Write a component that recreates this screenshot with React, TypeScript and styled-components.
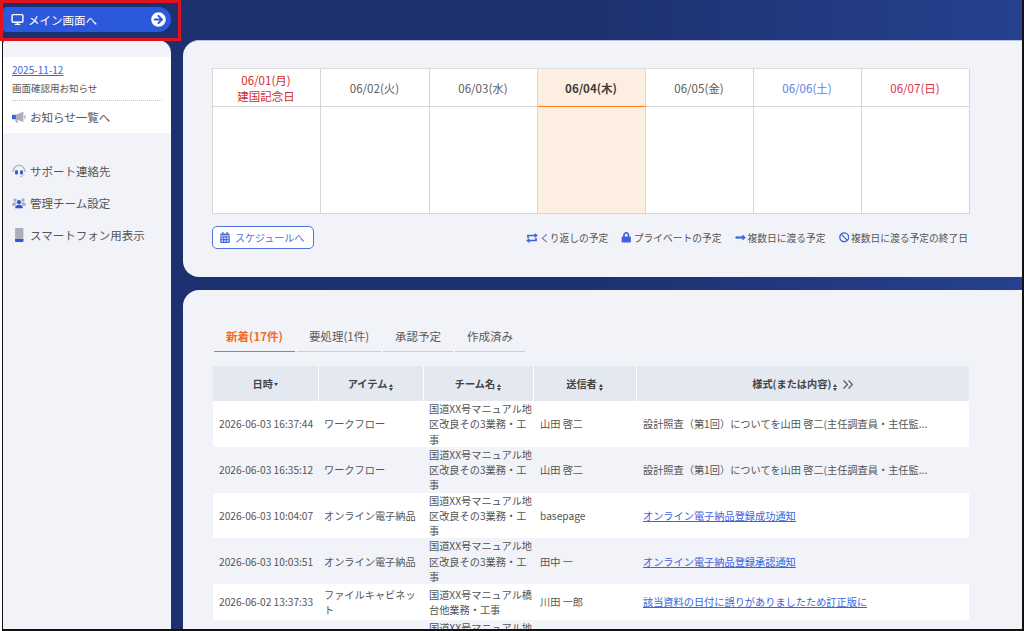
import styled, { createGlobalStyle } from 'styled-components';
import {
  FaArrowCircleRight,
  FaBan,
  FaCalendarAlt,
  FaLock,
  FaLongArrowAltRight,
} from 'react-icons/fa';
import { LuMonitor } from 'react-icons/lu';

const GlobalStyle = createGlobalStyle`
  html, body {
    margin: 0;
    background: #fff;
  }
  * {
    box-sizing: border-box;
  }
`;

const Page = styled.div`
  position: relative;
  width: 1024px;
  height: 631px;
  padding-left: 2px;
  background: #fff;
  overflow: hidden;
  font-family: 'Noto Sans CJK JP', 'Noto Sans', sans-serif;
  color: #555;
`;

const Frame = styled.div`
  height: 100%;
  display: flex;
  flex-direction: column;
  border-left: 1px solid #111;
  border-right: 2px solid #111;
  border-bottom: 2px solid #111;
  background: linear-gradient(90deg, #1c2f6e 0%, #1e3272 60%, #25418f 100%);
  overflow: hidden;
`;

const TopBar = styled.header`
  flex: 0 0 40px;
  width: 168px;
  padding-top: 7px;
`;

const MainButton = styled.a`
  height: 25px;
  display: flex;
  align-items: center;
  padding: 0 5px 0 8px;
  border-radius: 4px 13px 13px 4px;
  background: #2c59dc;
  color: #fff;
  font-size: 11.5px;
  svg:first-child {
    width: 13px;
    height: 13px;
    margin-right: 4px;
    stroke-width: 2.6;
  }
  svg:last-child {
    width: 15px;
    height: 15px;
    margin-left: auto;
  }
`;

const Highlight = styled.div`
  position: absolute;
  left: 0;
  top: 0;
  width: 181px;
  height: 41px;
  border: 3px solid #e0141c;
  pointer-events: none;
`;

const Body = styled.div`
  flex: 1;
  min-height: 0;
  display: flex;
  gap: 12px;
`;

const Sidebar = styled.aside`
  flex: 0 0 168px;
  padding-top: 17px;
  border-radius: 4px 13px 0 0;
  background: #f1f3f8;
`;

const NoticeBox = styled.section`
  height: 76px;
  padding: 6px 9px 0;
  background: #fff;
`;

const DateLink = styled.a`
  display: block;
  font-size: 10px;
  line-height: 14px;
  color: #3f63dc;
  text-decoration: underline;
`;

const NoticeText = styled.p`
  margin: 4px 0 0;
  padding-bottom: 5px;
  font-size: 9.5px;
  line-height: 14px;
  border-bottom: 1px dotted #c4c4c4;
`;

const SideLink = styled.a`
  height: 32px;
  display: flex;
  align-items: center;
  gap: 4px;
  padding-left: 9px;
  font-size: 11.5px;
  color: #555;
  svg {
    flex: 0 0 14px;
    width: 14px;
    height: 14px;
  }
`;

const NoticeLink = styled(SideLink)`
  height: 31px;
  padding-left: 0;
`;

const SideMenu = styled.nav`
  margin-top: 22px;
`;

const Content = styled.main`
  flex: 1;
  min-width: 0;
  display: flex;
  flex-direction: column;
  gap: 13px;
`;

const Panel = styled.section`
  border-radius: 16px 0 0 16px;
  background: #f1f3f8;
  border-top: 1px solid #b9c2de;
`;

const CalendarPanel = styled(Panel)`
  flex: 0 0 237px;
  padding: 27px 52px 0 29px;
`;

const ListPanel = styled(Panel)`
  flex: 1;
  min-height: 0;
  border-top: 0;
  border-radius: 16px 0 0 0;
  padding: 37px 52px 0 30px;
  overflow: hidden;
`;

const Calendar = styled.div`
  display: grid;
  grid-template-columns: 108px 109px repeat(5, 108px);
  grid-template-rows: 38px 107px;
  width: 758px;
  border-left: 1px solid #d6d6d6;
  border-top: 1px solid #dedede;
  background: #fff;
`;

const dayColor = {
  plain: '#5c5c5c',
  holiday: '#d42a2a',
  sat: '#5f80e6',
  sun: '#d8324a',
  today: '#3d3d3d',
};

const DayHead = styled.div<{ $tone: keyof typeof dayColor }>`
  display: flex;
  flex-direction: column;
  align-items: center;
  justify-content: center;
  padding-right: 1px;
  border-right: 1px solid #d6d6d6;
  border-bottom: 1px solid ${(p) => (p.$tone === 'today' ? '#ff7a1a' : '#d6d6d6')};
  background: ${(p) => (p.$tone === 'today' ? '#fdeee2' : '#fff')};
  color: ${(p) => dayColor[p.$tone]};
  font-size: 11.5px;
  line-height: 16px;
  font-weight: ${(p) => (p.$tone === 'today' ? 700 : 400)};
`;

const DayCell = styled.div<{ $today?: boolean }>`
  border-right: 1px solid #d6d6d6;
  border-bottom: 1px solid #d6d6d6;
  background: ${(p) => (p.$today ? '#fdeee2' : '#fff')};
`;

const CalendarFoot = styled.div`
  display: flex;
  align-items: center;
  justify-content: space-between;
  width: 756px;
  margin-top: 12px;
`;

const ScheduleButton = styled.a`
  width: 102px;
  height: 23px;
  display: flex;
  align-items: center;
  gap: 5px;
  padding-left: 7px;
  border: 1px solid #4f74e6;
  border-radius: 5px;
  background: #fff;
  color: #4f6fe0;
  font-size: 10px;
  svg {
    width: 10px;
    height: 11px;
  }
`;

const Legend = styled.ul`
  display: flex;
  gap: 13px;
  margin: 0;
  padding: 0;
  list-style: none;
`;

const LegendItem = styled.li`
  display: flex;
  align-items: center;
  gap: 2px;
  font-size: 9.75px;
  line-height: 14px;
  svg {
    width: auto;
    height: 10.500px;
    color: #3f63dc;
  }
`;

const SpanIcon = styled(FaLongArrowAltRight)`
  && {
    width: 11px;
    height: 11px;
    stroke: currentColor;
    stroke-width: 24px;
  }
`;

const Tabs = styled.div`
  display: flex;
  gap: 2px;
  margin-left: 1px;
`;

const Tab = styled.a<{ $active?: boolean; $width: number }>`
  width: ${(p) => p.$width}px;
  height: 25px;
  text-align: center;
  font-size: 11.5px;
  line-height: 18px;
  font-weight: ${(p) => (p.$active ? 700 : 400)};
  color: ${(p) => (p.$active ? '#f56a1d' : '#5a5a5a')};
  border-bottom: 1px solid ${(p) => (p.$active ? '#f56a1d' : '#cfcfcf')};
`;

const Table = styled.table`
  width: 756px;
  margin-top: 14px;
  table-layout: fixed;
  border-collapse: collapse;
  font-size: 10.2px;
  line-height: 15.25px;
`;

const Th = styled.th`
  height: 35px;
  padding: 0;
  background: #e4e8f1;
  border-left: 1px solid #fff;
  color: #444;
  font-size: 10.2px;
  font-weight: 700;
  &:first-child {
    border-left: 0;
  }
`;

const Tr = styled.tr`
  &:nth-child(even) td {
    background: #f1f3f8;
  }
`;

const Td = styled.td`
  height: 36px;
  padding: 0 0 0 6px;
  background: #fff;
  vertical-align: middle;
  word-break: break-all;
  &:nth-child(n + 4) {
    padding-left: 7px;
  }
`;

const MessageLink = styled.a`
  color: #3f63dc;
  text-decoration: underline;
`;

const Sort = styled.span`
  display: inline-flex;
  flex-direction: column;
  gap: 1px;
  margin-left: 2px;
  vertical-align: 1px;
  &::before,
  &::after {
    content: '';
    width: 0;
    height: 0;
    border-left: 2.500px solid transparent;
    border-right: 2.500px solid transparent;
  }
  &::before {
    border-bottom: 3px solid #444;
  }
  &::after {
    border-top: 3px solid #444;
  }
`;

const SortDown = styled.span`
  display: inline-block;
  width: 0;
  height: 0;
  margin-left: 1px;
  vertical-align: 2px;
  border-left: 2.500px solid transparent;
  border-right: 2.500px solid transparent;
  border-top: 3px solid #444;
`;

const ExpandSvg = styled.svg`
  width: 10px;
  height: 9px;
  margin-left: 6px;
  vertical-align: -1px;
`;

function ExpandIcon() {
  return (
    <ExpandSvg viewBox="0 0 10 9">
      <path d="M.5.5 4.500 4.500.5 8.500M5.500.5l4 4-4 4" fill="none" stroke="#555" strokeWidth="1.200" />
    </ExpandSvg>
  );
}

function RepeatIcon() {
  return (
    <svg viewBox="0 0 12 10" style={{ height: 10 }}>
      <path d="M2 5V2.500h7.500M10 5v2.500H2.500" fill="none" stroke="currentColor" strokeWidth="1.700" />
      <path d="M8.500 0 12 2.500 8.500 5zM3.500 5 0 7.500 3.500 10z" fill="currentColor" />
    </svg>
  );
}

function Megaphone() {
  return (
    <svg viewBox="0 0 16 16">
      <path d="M0 5.500h4.500v5H0z" fill="#3560dc" />
      <path d="M3 10.500h3l1 4H5z" fill="#a9afbd" />
      <path d="M4.500 5.500 13 2v12l-8.500-3.500z" fill="#a9afbd" />
      <path d="M14 6h1.500v4H14z" fill="#a9afbd" />
    </svg>
  );
}

function Headset() {
  return (
    <svg viewBox="0 0 16 16">
      <path d="M1.500 9V8a6.500 6.500 0 0 1 13 0v1" fill="none" stroke="#b4b9c6" strokeWidth="1.800" />
      <path d="M13 12.500c-.5 1.500-2 2-4 2" fill="none" stroke="#b4b9c6" strokeWidth="1.200" />
      <rect x="3.500" y="7" width="3.200" height="5" rx="1.400" fill="#2f55d8" />
      <rect x="9.300" y="7" width="3.200" height="5" rx="1.400" fill="#2f55d8" />
    </svg>
  );
}

function Team() {
  return (
    <svg viewBox="0 0 16 16">
      <circle cx="3.500" cy="4.500" r="2" fill="#a9afbd" />
      <circle cx="12.500" cy="4.500" r="2" fill="#a9afbd" />
      <path d="M0 10c0-2 1.500-3 3.500-3S6 8 4 11H0zM16 10c0-2-1.500-3-3.500-3S10 8 12 11h4z" fill="#a9afbd" />
      <circle cx="8" cy="7" r="2.300" fill="#2f55d8" />
      <path d="M3.500 14c0-2.500 2-4 4.500-4s4.500 1.500 4.500 4z" fill="#2f55d8" />
    </svg>
  );
}

function Phone() {
  return (
    <svg viewBox="0 0 16 16">
      <rect x="3.500" y="0" width="9.500" height="16" rx="1.500" fill="#a9afbd" />
      <path d="M3.500 12.500H13v2a1.500 1.500 0 0 1-1.500 1.500H5a1.500 1.500 0 0 1-1.500-1.500z" fill="#2f55d8" />
    </svg>
  );
}

const days = [
  { label: '06/01(月)', sub: '建国記念日', tone: 'holiday' },
  { label: '06/02(火)', tone: 'plain' },
  { label: '06/03(水)', tone: 'plain' },
  { label: '06/04(木)', tone: 'today' },
  { label: '06/05(金)', tone: 'plain' },
  { label: '06/06(土)', tone: 'sat' },
  { label: '06/07(日)', tone: 'sun' },
] as const;

const teamA = '国道XX号マニュアル地区改良その3業務・工事';
const teamB = '国道XX号マニュアル橋台他業務・工事';
const approval = '設計照査（第1回）についてを山田 啓二(主任調査員・主任監...';

const rows = [
  { date: '2026-06-03 16:37:44', item: 'ワークフロー', team: teamA, from: '山田 啓二', text: approval },
  { date: '2026-06-03 16:35:12', item: 'ワークフロー', team: teamA, from: '山田 啓二', text: approval },
  { date: '2026-06-03 10:04:07', item: 'オンライン電子納品', team: teamA, from: 'basepage', link: 'オンライン電子納品登録成功通知' },
  { date: '2026-06-03 10:03:51', item: 'オンライン電子納品', team: teamA, from: '田中 一', link: 'オンライン電子納品登録承認通知' },
  { date: '2026-06-02 13:37:33', item: 'ファイルキャビネット', team: teamB, from: '川田 一郎', link: '該当資料の日付に誤りがありましたため訂正版に' },
  { date: '2026-06-02 11:20:18', item: 'ワークフロー', team: teamA, from: '山田 啓二', text: approval },
];

export default function App() {
  return (
    <Page>
      <GlobalStyle />
      <Frame>
        <TopBar>
          <MainButton>
            <LuMonitor />
            メイン画面へ
            <FaArrowCircleRight />
          </MainButton>
        </TopBar>
        <Body>
          <Sidebar>
            <NoticeBox>
              <DateLink>2025-11-12</DateLink>
              <NoticeText>画面確認用お知らせ</NoticeText>
              <NoticeLink>
                <Megaphone />
                お知らせ一覧へ
              </NoticeLink>
            </NoticeBox>
            <SideMenu>
              <SideLink>
                <Headset />
                サポート連絡先
              </SideLink>
              <SideLink>
                <Team />
                管理チーム設定
              </SideLink>
              <SideLink>
                <Phone />
                スマートフォン用表示
              </SideLink>
            </SideMenu>
          </Sidebar>
          <Content>
            <CalendarPanel>
              <Calendar>
                {days.map((d) => (
                  <DayHead key={d.label} $tone={d.tone}>
                    <span>{d.label}</span>
                    {'sub' in d && <span>{d.sub}</span>}
                  </DayHead>
                ))}
                {days.map((d) => (
                  <DayCell key={d.label} $today={d.tone === 'today'} />
                ))}
              </Calendar>
              <CalendarFoot>
                <ScheduleButton>
                  <FaCalendarAlt />
                  スケジュールへ
                </ScheduleButton>
                <Legend>
                  <LegendItem>
                    <RepeatIcon />
                    くり返しの予定
                  </LegendItem>
                  <LegendItem>
                    <FaLock />
                    プライベートの予定
                  </LegendItem>
                  <LegendItem>
                    <SpanIcon />
                    複数日に渡る予定
                  </LegendItem>
                  <LegendItem>
                    <FaBan />
                    複数日に渡る予定の終了日
                  </LegendItem>
                </Legend>
              </CalendarFoot>
            </CalendarPanel>
            <ListPanel>
              <Tabs>
                <Tab $active $width={81}>新着(17件)</Tab>
                <Tab $width={84}>要処理(1件)</Tab>
                <Tab $width={70}>承認予定</Tab>
                <Tab $width={70}>作成済み</Tab>
              </Tabs>
              <Table>
                <colgroup>
                  <col style={{ width: 105 }} />
                  <col style={{ width: 105 }} />
                  <col style={{ width: 110 }} />
                  <col style={{ width: 103 }} />
                  <col style={{ width: 333 }} />
                </colgroup>
                <thead>
                  <tr>
                    <Th>日時<SortDown /></Th>
                    <Th>アイテム<Sort /></Th>
                    <Th>チーム名<Sort /></Th>
                    <Th>送信者<Sort /></Th>
                    <Th>様式(または内容)<Sort /><ExpandIcon /></Th>
                  </tr>
                </thead>
                <tbody>
                  {rows.map((r) => (
                    <Tr key={r.date}>
                      <Td>{r.date}</Td>
                      <Td>{r.item}</Td>
                      <Td>{r.team}</Td>
                      <Td>{r.from}</Td>
                      <Td>{r.link ? <MessageLink>{r.link}</MessageLink> : r.text}</Td>
                    </Tr>
                  ))}
                </tbody>
              </Table>
            </ListPanel>
          </Content>
        </Body>
      </Frame>
      <Highlight />
    </Page>
  );
}
